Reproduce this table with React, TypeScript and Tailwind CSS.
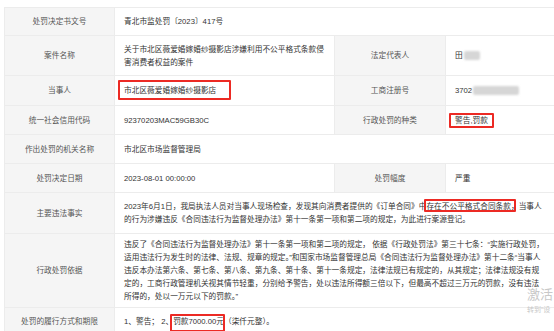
import type { ReactNode } from "react";

// red annotation box drawn over a piece of text
function Mark({ children, box }: { children: ReactNode; box: string }) {
  return (
    <span className="relative">
      {children}
      <span className={`pointer-events-none absolute rounded-[1px] border-2 border-[#ec2a24] ${box}`} />
    </span>
  );
}

function Label({ children }: { children: ReactNode }) {
  return (
    <td className="border border-[#ececec] bg-[#f5f5f5] px-[6px] text-center align-middle text-[#555]">
      {children}
    </td>
  );
}

function Value({ children, span = 1 }: { children: ReactNode; span?: number }) {
  return (
    <td colSpan={span} className="border border-[#ececec] bg-white px-[9px] align-middle text-[#333]">
      {children}
    </td>
  );
}

function Blur({ w }: { w: string }) {
  return <span className={`ml-[1px] inline-block h-[9px] rounded-[2px] bg-[#d6d6d6] align-middle blur-[1.2px] ${w}`} />;
}

export default function App() {
  return (
    <div className="relative h-[331px] w-[554px] overflow-hidden bg-white font-['Liberation_Sans','Noto_Sans_CJK_SC',sans-serif] text-[7.7px] leading-[13px]">
      <table className="ml-[4px] mt-[7px] w-[572px] table-fixed border-collapse">
        <colgroup>
          <col className="w-[110px]" />
          <col className="w-[220px]" />
          <col className="w-[111px]" />
          <col className="w-[131px]" />
        </colgroup>
        <tbody>
          <tr className="h-[28px]">
            <Label>处罚决定书文号</Label>
            <Value span={3}>青北市监处罚〔2023〕417号</Value>
          </tr>
          <tr className="h-[40px]">
            <Label>案件名称</Label>
            <Value>
              <span className="block whitespace-nowrap">关于市北区薇爱婚嫁婚纱摄影店涉嫌利用不公平格式条款侵</span>
              <span className="block whitespace-nowrap">害消费者权益的案件</span>
            </Value>
            <Label>法定代表人</Label>
            <Value>
              田<Blur w="w-[16px]" />
            </Value>
          </tr>
          <tr className="h-[30px]">
            <Label>当事人</Label>
            <Value>
              <Mark box="-left-[6px] -right-[15px] -top-[6px] -bottom-[5px]">市北区薇爱婚嫁婚纱摄影店</Mark>
            </Value>
            <Label>工商注册号</Label>
            <Value>
              3702<Blur w="w-[46px]" />
            </Value>
          </tr>
          <tr className="h-[29px]">
            <Label>统一社会信用代码</Label>
            <Value>92370203MAC59GB30C</Value>
            <Label>行政处罚的种类</Label>
            <Value>
              <Mark box="-left-[6px] -right-[6px] -top-[3px] -bottom-[3px]">警告,罚款</Mark>
            </Value>
          </tr>
          <tr className="h-[29px]">
            <Label>作出处罚的机关名称</Label>
            <Value span={3}>市北区市场监督管理局</Value>
          </tr>
          <tr className="h-[29px]">
            <Label>处罚决定日期</Label>
            <Value>2023-08-01 00:00:00</Value>
            <Label>处罚幅度</Label>
            <Value>严重</Value>
          </tr>
          <tr className="h-[41px]">
            <Label>主要违法事实</Label>
            <Value span={3}>
              <span className="block whitespace-nowrap">
                2023年6月1日，我局执法人员对当事人现场检查，发现其向消费者提供的《订单合同》中
                <Mark box="-left-[2px] -right-[5px] -top-[3px] -bottom-[1px]">存在不公平格式合同条款</Mark>
                ，当事人
              </span>
              <span className="block whitespace-nowrap">
                的行为涉嫌违反《合同违法行为监督处理办法》第十一条第一项和第二项的规定，为此进行案源登记。
              </span>
            </Value>
          </tr>
          <tr className="h-[74px]">
            <Label>行政处罚依据</Label>
            <Value span={3}>
              <span className="block whitespace-nowrap">
                违反了《合同违法行为监督处理办法》第十一条第一项和第二项的规定， 依据《行政处罚法》第三十七条：“实施行政处罚，
              </span>
              <span className="block whitespace-nowrap">
                适用违法行为发生时的法律、法规、规章的规定。”和国家市场监督管理总局《合同违法行为监督处理办法》第十二条“当事人
              </span>
              <span className="block whitespace-nowrap">
                违反本办法第六条、第七条、第八条、第九条、第十条、第十一条规定，法律法规已有规定的，从其规定；法律法规没有规
              </span>
              <span className="block whitespace-nowrap">
                定的，工商行政管理机关视其情节轻重，分别给予警告，处以违法所得额三倍以下，但最高不超过三万元的罚款，没有违法
              </span>
              <span className="block whitespace-nowrap">所得的，处以一万元以下的罚款。”</span>
            </Value>
          </tr>
          <tr className="h-[28px]">
            <Label>处罚的履行方式和期限</Label>
            <Value span={3}>
              1、警告； 2、
              <Mark box="-left-[3px] -right-[1px] -top-[3px] -bottom-[6px]">罚款7000.00元</Mark>
              （柒仟元整）。
            </Value>
          </tr>
        </tbody>
      </table>

      {/* system watermark peeking in at the corner */}
      <div className="pointer-events-none absolute left-[527px] top-[287px] whitespace-nowrap text-[13px] leading-[16px] text-[#c8c8c8]">
        激活
      </div>
      <div className="pointer-events-none absolute left-[527px] top-[305px] whitespace-nowrap text-[7px] leading-[10px] text-[#c8c8c8]">
        转到“设
      </div>
    </div>
  );
}
